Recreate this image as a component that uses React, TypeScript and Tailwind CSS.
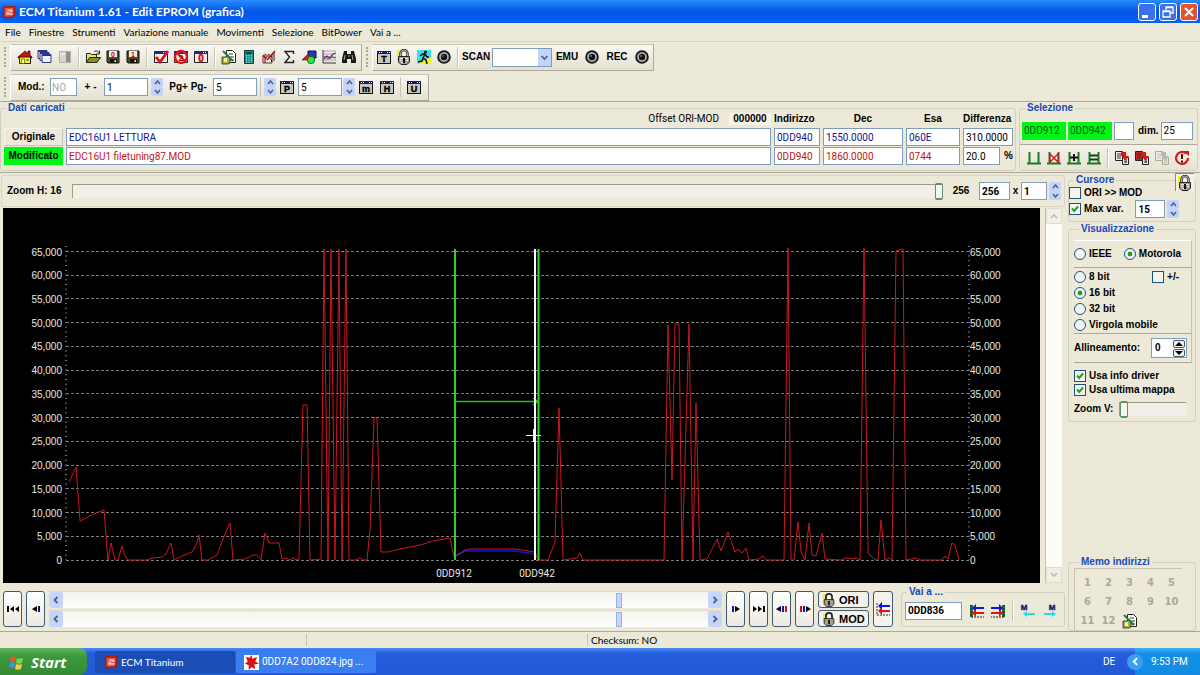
import React from 'react';
import clsx from 'clsx';

const BOLD = "font-['Liberation_Sans',Arial,sans-serif] text-[10px] leading-3 font-bold";
const UI = "font-[Roboto,'Liberation_Sans',sans-serif] text-[10px] leading-3";
const MENU = "font-[Lato,'Liberation_Sans',sans-serif] text-[10px] leading-3";

// [x, y] points of the MOD trace, in chart units
const TRACE = [
    [69, 482], [76, 467], [80, 521], [94, 514], [104, 510], [108, 560], [111, 543], [115, 560], [118, 560], [122, 546],
    [125, 556], [128, 560], [147, 560], [153, 558], [162, 557], [166, 554], [171, 543], [174, 560], [182, 556], [192, 552],
    [197, 543], [199, 535], [202, 560], [208, 560], [217, 555], [225, 534], [230, 523], [233, 560], [245, 559], [253, 555],
    [257, 555], [261, 560], [265, 533], [269, 543], [279, 543], [282, 559], [286, 558], [290, 560], [293, 558], [296, 560],
    [299, 559], [303, 405], [307, 405], [310, 560], [321, 559], [324, 249], [328, 560], [331, 249], [335, 560], [339, 249],
    [342, 560], [346, 249], [349, 560], [356, 560], [360, 558], [363, 560], [367, 560], [370, 530], [374, 418], [377, 418],
    [381, 552], [388, 552], [400, 549], [420, 545], [433, 541], [450, 538], [454, 557], [465, 550], [471, 549], [515, 549],
    [535, 552], [538, 560], [548, 560], [552, 550], [555, 542], [559, 408], [563, 560], [577, 558], [580, 553], [583, 560],
    [664, 560], [668, 325], [672, 480], [675, 324], [679, 324], [682, 560], [689, 324], [693, 560], [696, 403], [700, 560],
    [707, 559], [717, 539], [721, 551], [728, 532], [735, 552], [738, 549], [742, 553], [746, 548], [749, 560], [759, 559],
    [763, 556], [766, 560], [784, 560], [788, 248], [791, 560], [794, 560], [798, 522], [801, 552], [805, 560], [809, 523],
    [812, 555], [816, 556], [822, 533], [825, 559], [841, 560], [846, 558], [851, 559], [856, 558], [860, 560], [864, 248],
    [868, 553], [875, 560], [878, 560], [881, 520], [885, 560], [889, 558], [892, 560], [896, 251], [903, 249], [906, 560],
    [916, 558], [920, 560], [942, 560], [945, 556], [948, 559], [952, 543], [955, 545], [959, 560],
];

const LEVELS = [65, 60, 55, 50, 45, 40, 35, 30, 25, 20, 15, 10, 5, 0];
const yOf = (k: number) => 560 - (k * 308.5) / 65;

function Glyph({ children, size = 16 }: { children: React.ReactNode; size?: number }) {
    return (
        <svg viewBox="0 0 16 16" width={size} height={size} className="shrink-0" aria-hidden="true">
            {children}
        </svg>
    );
}

function LetterIcon({ letter }: { letter: string }) {
    return (
        <Glyph>
            <path d="M1 2h14v13H1z" fill="#111" />
            <path d="M2 5h12v9H2z" fill="#c9c7c0" />
            <path d="M1 2h14v3H1z" fill="#1c1c60" />
            <path d="M3 3h1v1H3zM5 3h1v1H5zM11 3h1v1h-1zM13 3h1v1h-1z" fill="#fff" />
            <text x="8" y="13" textAnchor="middle" fontSize="9" fontWeight="900" fontFamily="Liberation Sans" stroke="#000" strokeWidth=".4">{letter}</text>
        </Glyph>
    );
}

function Lock() {
    return (
        <Glyph>
            <path d="M1 1h6l-2 6-4 5z" fill="#f3ee3c" />
            <path d="M4.500 8V4.500a3.500 3.500 0 0 1 7 0V8" fill="none" stroke="#222" strokeWidth="2.400" />
            <path d="M4.500 8V4.500a3.500 3.500 0 0 1 7 0V8" fill="none" stroke="#ddd" strokeWidth=".8" />
            <path d="M2.500 7.500h11V13l-2.500 2.500H5L2.500 13z" fill="#a3a18c" stroke="#222" />
            <path d="M4 9.500h8M4 11.500h2M10 11.500h2M5 13.500h2" stroke="#eee" />
            <path d="M7 9h2v5H7z" fill="#111" />
        </Glyph>
    );
}

function Target() {
    return (
        <Glyph>
            <circle cx="8" cy="8" r="6" fill="#777" stroke="#111" strokeWidth="1.500" />
            <circle cx="8" cy="8" r="4.300" fill="#c4c4c4" />
            <circle cx="8" cy="8" r="3.200" fill="#111" />
            <circle cx="7" cy="7" r="1" fill="#777" />
        </Glyph>
    );
}

function Floppy({ letter }: { letter: string }) {
    return (
        <Glyph>
            <path d="M2 2h12v12H3l-1-1z" fill="#4d4a1c" stroke="#111" />
            <path d="M4 2h8v6H4z" fill="#f4eeee" />
            <path d="M5 10h7v4H5z" fill="#111" />
            <path d="M9.500 11h1.500v2H9.500z" fill="#ddd" />
            <text x="8" y="7.600" textAnchor="middle" fontSize="7" fontWeight="bold" fontFamily="Liberation Sans" fill="#c00">{letter}</text>
        </Glyph>
    );
}

function WindowBase() {
    return (
        <>
            <path d="M1.500 2.500h13v11h-13z" fill="#f1efec" stroke="#222" />
            <path d="M1 2h14v3H1z" fill="#26267c" />
            <path d="M10 3h1v1h-1zM12 3h1v1h-1z" fill="#fff" />
        </>
    );
}

function NoteIcon() {
    return (
        <Glyph>
            <path d="M5.500 1.500h6l3 3v9h-9z" fill="#fff" stroke="#222" />
            <path d="M8 5h4M9 8h4M9 11h4" stroke="#333" />
            <path d="M1 8h4l2-2 2 3v5l-2 1H1z" fill="#a9ad3f" stroke="#222" strokeWidth=".8" />
            <path d="M3 9h3v4H3z" fill="#f5f3a0" />
            <path d="M2 2l10 10" stroke="#1d7a3a" strokeWidth="1.800" />
        </Glyph>
    );
}

const toolIcons: Record<string, React.ReactNode> = {
    Home: (
        <Glyph>
            <path d="M1 8l7-6 3 2.500V2h2v4l2 2v1H1z" fill="#c71515" stroke="#400" strokeWidth=".7" />
            <path d="M2.500 8h11v6.500h-11z" fill="#fdf21a" stroke="#222" />
            <path d="M4.500 10h3v4.500h-3z" fill="#fff9a8" stroke="#665c00" strokeWidth=".7" />
            <path d="M9.500 10h2v2h-2z" fill="#2a8fa3" />
        </Glyph>
    ),
    Windows: (
        <Glyph>
            {[1, 3, 5].map((o) => (
                <g key={o}>
                    <path d={`M${o} ${o + 0.5}h9v8h-9z`} fill="#eef0fa" stroke="#333c78" />
                    <path d={`M${o} ${o}h9v2h-9z`} fill="#28348c" />
                </g>
            ))}
        </Glyph>
    ),
    Panels: (
        <Glyph>
            <path d="M2.500 2.500h11v11h-11z" fill="#d8d6cd" stroke="#b4b2a7" />
            <path d="M9 3h4v10H9z" fill="#918f88" />
            <path d="M3 5h5" stroke="#f5f5f0" />
        </Glyph>
    ),
    Open: (
        <Glyph>
            <path d="M1.500 13.500v-9h4l1 1h5v3" fill="#e7e26c" stroke="#222" />
            <path d="M1.500 13.500l3-5h11l-3.500 5z" fill="#8f8f16" stroke="#222" />
            <path d="M9 3c2-2 4-1 5 1M14.500 1.500V5H11" fill="none" stroke="#222" />
        </Glyph>
    ),
    'Save 0': <Floppy letter="0" />,
    'Save 1': <Floppy letter="1" />,
    Apply: (
        <Glyph>
            <WindowBase />
            <path d="M3 8l4 5 8-11" fill="none" stroke="#e01020" strokeWidth="2.800" />
        </Glyph>
    ),
    Refuse: (
        <Glyph>
            <WindowBase />
            <circle cx="8" cy="8" r="6" fill="none" stroke="#e01020" strokeWidth="2.400" />
            <path d="M4 4l8 8" stroke="#e01020" strokeWidth="2" />
            <text x="8" y="11.500" textAnchor="middle" fontSize="9" fontWeight="bold" fontFamily="Liberation Sans" fill="#b00">2</text>
        </Glyph>
    ),
    Zero: (
        <Glyph>
            <WindowBase />
            <text x="8" y="13" textAnchor="middle" fontSize="10" fontWeight="bold" fontFamily="Liberation Sans" fill="#d01010" stroke="#d01010" strokeWidth=".5">0</text>
        </Glyph>
    ),
    Notes: <NoteIcon />,
    Calculator: (
        <Glyph>
            <path d="M3.500 1.500h9v13h-9z" fill="#1d8f8c" stroke="#0b3c3c" />
            <path d="M5 3h6v2H5z" fill="#0c4a4c" />
            <path d="M5.500 6v8M8 6v8M10.500 6v8" stroke="#7fe0dc" strokeDasharray="1.300 1" />
        </Glyph>
    ),
    Compare: (
        <Glyph>
            <path d="M2 7l3-2v4l3-4v4l3-3v8H2z" fill="#f2e9e6" stroke="#822" />
            <path d="M2 6l3 4M6 11l8-9" stroke="#b01818" strokeWidth="1.800" />
            <path d="M10.500 7v6M13 4v8M4 10v4" stroke="#222" />
            <path d="M9 10l5-2" stroke="#888" strokeWidth="2" />
        </Glyph>
    ),
    Sum: (
        <Glyph>
            <path d="M12.500 5V2.500H4L8.500 8 4 13.500h8.500V11" fill="none" stroke="#222" strokeWidth="1.400" />
        </Glyph>
    ),
    Shapes: (
        <Glyph>
            <path d="M7 2h8v7H7z" fill="#2638b8" stroke="#114" />
            <path d="M1 11l6-6 4 6z" fill="#d81818" stroke="#600" strokeWidth=".6" />
            <circle cx="10" cy="11" r="3.700" fill="#2ce43c" stroke="#052" strokeWidth=".8" />
        </Glyph>
    ),
    Graph: (
        <Glyph>
            <path d="M2 2h13M2 5h13M2 8h13M2 11h13" stroke="#a5a2ae" />
            <path d="M2 1v13h13" fill="none" stroke="#333" />
            <path d="M3 10l3-3 3 2 3-4 3-1" fill="none" stroke="#8b1f6f" strokeWidth="1.300" />
            <path d="M3 7l4 3 4-2 4 1" fill="none" stroke="#55506a" />
        </Glyph>
    ),
    Find: (
        <Glyph>
            <path d="M3 2h3v3h4V2h3l2 8v4h-5v-4H6v4H1v-4z" fill="#161616" />
            <path d="M4 6l-1 5M11 6l1 5M7 7h2" stroke="#aaa" />
        </Glyph>
    ),
};

const tools = [
    ['Home', 'Windows', 'Panels'],
    ['Open', 'Save 0', 'Save 1'],
    ['Apply', 'Refuse', 'Zero'],
    ['Notes', 'Calculator', 'Compare', 'Sum', 'Shapes', 'Graph', 'Find'],
];

function ToolButton({ label, children }: { label: string; children: React.ReactNode }) {
    return (
        <button aria-label={label} className="flex h-5 w-5 shrink-0 items-center justify-center">
            {children}
        </button>
    );
}

function Sep() {
    return <span className="mx-[3px] h-5 w-[2px] shrink-0 border-l border-[#c5c2b2] bg-white" />;
}

function Grip() {
    return <span className="mx-1 h-5 w-[2px] shrink-0 border-l-2 border-dotted border-[#aaa797]" />;
}

function Band({ children, className }: { children: React.ReactNode; className?: string }) {
    return (
        <div className={clsx('flex h-[27px] items-center border-t border-l border-r border-b border-t-[#c8c5b5] border-l-[#fff] border-r-[#aca899] border-b-[#aca899] bg-linear-to-b from-[#f8f7f2] to-[#e4e1d0]', className)}>
            {children}
        </div>
    );
}

type FieldProps = { label: string; value: string; className?: string; tone?: string };

function Field({ label, value, className, tone = 'border border-[#7f9db9] bg-white' }: FieldProps) {
    return (
        <input
            aria-label={label}
            defaultValue={value}
            className={clsx(UI, 'h-[18px] min-w-0 px-[2px] outline-none', tone, className)}
        />
    );
}

function Spinner({ label }: { label: string }) {
    return (
        <span className="flex w-3 shrink-0 flex-col">
            <button aria-label={`${label} +`} className="flex h-[9px] items-center justify-center rounded-[2px] bg-[#c3d3fb]">
                <svg viewBox="0 0 7 5" width="7" height="5"><path d="M1 4l2.500-3L6 4" fill="none" stroke="#4d6185" strokeWidth="1.500" /></svg>
            </button>
            <button aria-label={`${label} -`} className="flex h-[9px] items-center justify-center rounded-[2px] bg-[#c3d3fb]">
                <svg viewBox="0 0 7 5" width="7" height="5"><path d="M1 1l2.500 3L6 1" fill="none" stroke="#4d6185" strokeWidth="1.500" /></svg>
            </button>
        </span>
    );
}

function Check({ label, checked }: { label: string; checked?: boolean }) {
    return (
        <label className={clsx(BOLD, 'flex h-[14px] items-center gap-[3px] whitespace-nowrap')}>
            <span className="grid">
                <input type="checkbox" defaultChecked={checked} className="peer h-3 w-3 appearance-none border border-[#1c5180] bg-[#f4f4f0] [grid-area:1/1]" />
                <svg viewBox="0 0 12 12" width="12" height="12" className="pointer-events-none hidden [grid-area:1/1] peer-checked:block">
                    <path d="M3 5.500l2.200 2.500L9 3.500" fill="none" stroke="#21a121" strokeWidth="2" />
                </svg>
            </span>
            {label}
        </label>
    );
}

function Radio({ label, name, checked }: { label: string; name: string; checked?: boolean }) {
    return (
        <label className={clsx(BOLD, 'flex h-4 items-center gap-[3px] whitespace-nowrap')}>
            <input
                type="radio"
                name={name}
                defaultChecked={checked}
                className="h-3 w-3 appearance-none rounded-full border border-[#1c5180] bg-[#f4f4f0] checked:bg-[radial-gradient(circle,#21a121_30%,#f4f4f0_38%)]"
            />
            {label}
        </label>
    );
}

function Group({ title, children, className }: { title: string; children: React.ReactNode; className?: string }) {
    return (
        <fieldset className={clsx('min-w-0 rounded-[3px] border border-[#d0d0bf]', className)}>
            <legend className="ml-[5px] px-[2px] font-['Liberation_Sans',Arial,sans-serif] text-[10px] leading-[10px] font-bold text-[#1648b8]">{title}</legend>
            {children}
        </fieldset>
    );
}

function NavButton({ label, children }: { label: string; children: React.ReactNode }) {
    return (
        <button aria-label={label} className="flex h-9 w-[19px] shrink-0 items-center justify-center rounded-[3px] border border-[#3c5a73] bg-linear-to-b from-white to-[#eceae0]">
            <svg viewBox="0 0 14 10" width="14" height="10">{children}</svg>
        </button>
    );
}

function HScroll({ label }: { label: string }) {
    return (
        <div className="flex h-[17px] border-t border-[#dcdad0] bg-linear-to-b from-[#f3f2ec] to-[#fefefb]">
            <button aria-label={`${label} indietro`} className="flex w-[14px] items-center justify-center rounded-[2px] bg-[#c5d5fc]">
                <svg viewBox="0 0 8 8" width="8" height="8"><path d="M5.500 1L2.500 4l3 3" fill="none" stroke="#4d6185" strokeWidth="1.800" /></svg>
            </button>
            <input
                type="range"
                aria-label={label}
                max={1000}
                defaultValue={866}
                className="h-4 min-w-0 flex-1 appearance-none bg-transparent [&::-webkit-slider-thumb]:h-[15px] [&::-webkit-slider-thumb]:w-[6px] [&::-webkit-slider-thumb]:appearance-none [&::-webkit-slider-thumb]:border [&::-webkit-slider-thumb]:border-[#98b1e4] [&::-webkit-slider-thumb]:bg-[#c5d5fc]"
            />
            <button aria-label={`${label} avanti`} className="flex w-[14px] items-center justify-center rounded-[2px] bg-[#c5d5fc]">
                <svg viewBox="0 0 8 8" width="8" height="8"><path d="M2.500 1l3 3-3 3" fill="none" stroke="#4d6185" strokeWidth="1.800" /></svg>
            </button>
        </div>
    );
}

// two stacked arrows against a ruled bar
function ArrowsIcon({ flip, bars }: { flip?: boolean; bars?: boolean }) {
    return (
        <Glyph>
            <g transform={flip ? 'matrix(-1 0 0 1 16 0)' : undefined}>
                {bars && <path d="M1 2h3v12H1z" fill="#1c7a26" />}
                <path d="M2 2v12M2 14h13" stroke="#222" strokeDasharray="2 1" />
                <path d="M3 5l4-4v3h8v2H7v3z" fill="#1414e0" />
                <path d="M3 10l4-4v3h8v2H7v3z" fill="#e01414" />
                <path d="M4 5l3-3v2h8v2H7v2z" fill="#1414e0" />
            </g>
        </Glyph>
    );
}

function MemoArrow({ flip }: { flip?: boolean }) {
    return (
        <Glyph>
            <text x={flip ? 11 : 4} y="7" textAnchor="middle" fontSize="8" fontWeight="bold" fontFamily="Liberation Sans" fill="#10107a" stroke="#10107a" strokeWidth=".4">M</text>
            <path d={flip ? 'M15 11l-4-3v2H3v2h8v2z' : 'M3 11l4-3v2h8v2H7v2z'} fill="#25dfe2" />
        </Glyph>
    );
}

function SelIcon({ kind }: { kind: string }) {
    return (
        <Glyph>
            <path d="M3.500 2v11M12.500 2v11M1 13.500h14" stroke="#1c7a26" strokeWidth="2" />
            {kind === 'clear' && <path d="M4 4l8 8V4l-8 8z" fill="#fff" stroke="#d41616" strokeWidth="1.400" />}
            {kind === 'plus' && <path d="M4 7.500h8M8 4v7" stroke="#111" strokeWidth="2" />}
            {kind === 'equal' && <path d="M4 5.500h8M4 9.500h8" stroke="#173c1a" strokeWidth="2" />}
        </Glyph>
    );
}

function CopyIcon({ tone }: { tone: string }) {
    const off = tone === 'off';
    return (
        <Glyph>
            <path d="M1.500 1.500h7v9h-7z" fill={tone === 'red' ? '#d02020' : '#eee'} stroke={off ? '#aaa89c' : '#222'} />
            <path d="M3 4h4M3 6h4M3 8h4" stroke={off ? '#c4c2b6' : '#333'} />
            <path d="M8.500 7.500h6v7h-6z" fill={off ? '#e4e2d6' : '#f6e9c8'} stroke={off ? '#aaa89c' : '#222'} />
            <path d="M10 12h3M12 9v4" stroke={off ? '#c4c2b6' : '#333'} />
            <path d="M7 2h5v4h3l-4 5-3-5H7z" fill={off ? '#bbb9ad' : '#d81717'} />
        </Glyph>
    );
}

function AppIcon() {
    return (
        <Glyph size={14}>
            <path d="M3 1h12v11l-3 3H1V3z" fill="#a81c16" />
            <path d="M4 3h9v8l-2 2H3V4z" fill="#e0584a" />
            <path d="M6 5h6v3H8v1h4v2H5V8h4V7H6z" fill="#fff" opacity=".6" />
        </Glyph>
    );
}

function Chart() {
    return (
        <svg viewBox="3 208 1037 375" className="block w-full bg-black" role="img" aria-label="EPROM">
            {LEVELS.map((k) => (
                <g key={k}>
                    <path d={`M66 ${Math.floor(yOf(k)) + 0.5}H970`} stroke="#808080" strokeDasharray="3 2" />
                    <text x="62" y={yOf(k) + 4} textAnchor="end" className="fill-[#e8e8e8] font-['Liberation_Sans',Arial,sans-serif] text-[10px]">
                        {k ? `${k},000` : '0'}
                    </text>
                    <text x="970" y={yOf(k) + 4} className="fill-[#e8e8e8] font-['Liberation_Sans',Arial,sans-serif] text-[10px]">
                        {k ? `${k},000` : '0'}
                    </text>
                </g>
            ))}
            <path d="M66 246V560M969 246V560" stroke="#777" strokeWidth="2" strokeDasharray="1 3.750" />
            <polyline points="454,557 465,551 515,551 535,554" fill="none" stroke="#1414d8" strokeWidth="1.500" />
            <polyline points={TRACE.map((p) => p.join(',')).join(' ')} fill="none" stroke="#c8191e" />
            <path d="M455 249V560M538.500 249V560" stroke="#2fd02f" strokeWidth="2" />
            <path d="M455 401.500H538M533 398l5 3.500-5 3.500" fill="none" stroke="#22c022" strokeWidth="1.400" />
            <path d="M535 249V560" stroke="#fff" strokeWidth="2" />
            <path d="M526 435.500h15M533.500 429v13" stroke="#fff" />
            <text x="454" y="577" textAnchor="middle" className="fill-[#e8e8e8] font-[Roboto,sans-serif] text-[10px]">0DD912</text>
            <text x="537" y="577" textAnchor="middle" className="fill-[#e8e8e8] font-[Roboto,sans-serif] text-[10px]">0DD942</text>
        </svg>
    );
}

function TitleBar() {
    return (
        <header className="flex h-[23px] items-center gap-[3px] bg-linear-to-b from-[#2a8bff] via-[#0456e4] to-[#0562fb] px-[2px]">
            <AppIcon />
            <h1 className="flex-1 font-[Lato,sans-serif] text-[12px] leading-4 font-bold whitespace-nowrap text-white">ECM Titanium 1.61 - Edit EPROM (grafica)</h1>
            <button aria-label="Riduci" className="flex h-[18px] w-[18px] items-center justify-center rounded-[3px] border border-white bg-[#3a70ec]">
                <svg viewBox="0 0 16 16" width="16" height="16"><path d="M3 11h6v3H3z" fill="#fff" /></svg>
            </button>
            <button aria-label="Ripristina" className="flex h-[18px] w-[18px] items-center justify-center rounded-[3px] border border-white bg-[#3a70ec]">
                <svg viewBox="0 0 16 16" width="16" height="16"><path d="M6 6V3h7v6h-3M3 7h7v6H3zM3 7.500h7M6 3.500h7" fill="none" stroke="#fff" strokeWidth="1.300" /></svg>
            </button>
            <button aria-label="Chiudi" className="flex h-[18px] w-[18px] items-center justify-center rounded-[3px] border border-white bg-[#e2522e]">
                <svg viewBox="0 0 16 16" width="16" height="16"><path d="M4 4l8 8M12 4l-8 8" stroke="#fff" strokeWidth="2" /></svg>
            </button>
        </header>
    );
}

function Toolbars() {
    return (
        <div className="flex flex-col gap-[2px] border-t border-b border-t-[#d5d2c2] border-b-[#aca899] pt-px">
            <div className="flex h-7 items-center">
                <Grip />
                <Band className="pr-[2px] pl-1">
                    {tools.map((group, i) => (
                        <React.Fragment key={i}>
                            {i > 0 && <Sep />}
                            {group.map((name) => <ToolButton key={name} label={name}>{toolIcons[name]}</ToolButton>)}
                        </React.Fragment>
                    ))}
                </Band>
                <Grip />
                <Band className="px-px">
                    <ToolButton label="Testo"><LetterIcon letter="T" /></ToolButton>
                    <ToolButton label="Blocca"><Lock /></ToolButton>
                    <ToolButton label="Esegui">
                        <Glyph>
                            <path d="M1 1h14v9L1 15z" fill="#3be0ee" />
                            <path d="M1 15l14-7v7z" fill="#f6f11e" />
                            <circle cx="9.500" cy="3" r="1.600" />
                            <path d="M9 5L7 9l3 2 1 4M7 9l-1 3-4 1M4 7l3-2h2l2 3h2" fill="none" stroke="#111" strokeWidth="1.500" />
                        </Glyph>
                    </ToolButton>
                    <ToolButton label="Stato"><Target /></ToolButton>
                    <Sep />
                    <label htmlFor="scan" className={clsx(BOLD, 'w-[30px]')}>SCAN</label>
                    <span className="grid">
                        <select id="scan" className="h-[19px] w-[60px] appearance-none border border-[#7f9db9] bg-white [grid-area:1/1]">
                            <option value=""></option>
                        </select>
                        <svg viewBox="0 0 14 17" width="14" height="17" className="pointer-events-none self-center justify-self-end [grid-area:1/1]">
                            <path d="M0 0h13v17H0z" fill="#c3d3fb" />
                            <path d="M3.500 7l3 3 3-3" fill="none" stroke="#4d6185" strokeWidth="1.700" />
                        </svg>
                    </span>
                    <span className={clsx(BOLD, 'w-[30px] text-center')}>EMU</span>
                    <ToolButton label="EMU"><Target /></ToolButton>
                    <span className={clsx(BOLD, 'w-[30px] text-center')}>REC</span>
                    <ToolButton label="REC"><Target /></ToolButton>
                </Band>
            </div>
            <div className="flex h-7 items-center">
                <Grip />
                <Band className="gap-[3px] px-1">
                    <label htmlFor="mod" className={clsx(BOLD, 'w-[32px] pl-[3px]')}>Mod.:</label>
                    <input id="mod" defaultValue="NO" className={clsx(UI, 'h-[18px] w-[27px] border border-[#7f9db9] bg-white px-px text-[#aca899]')} />
                    <span className={clsx(BOLD, 'w-[21px] text-center')}>+ -</span>
                    <Field label="Passo" value="1" className="w-11" />
                    <Spinner label="Passo" />
                    <span className={clsx(BOLD, 'w-[44px] text-center whitespace-nowrap')}>Pg+ Pg-</span>
                    <Field label="Pagina" value="5" className="w-11" />
                    <span className="h-5 w-px bg-[#c5c2b2]" />
                    <div className="flex items-center gap-px">
                        <Spinner label="Pagina" />
                        <ToolButton label="P"><LetterIcon letter="P" /></ToolButton>
                        <Field label="Media" value="5" className="w-11" />
                        <Spinner label="Media" />
                        <ToolButton label="m"><LetterIcon letter="m" /></ToolButton>
                        <ToolButton label="H"><LetterIcon letter="H" /></ToolButton>
                    </div>
                    <span className="h-5 w-px bg-[#c5c2b2]" />
                    <ToolButton label="U"><LetterIcon letter="U" /></ToolButton>
                </Band>
            </div>
        </div>
    );
}

function DataRow() {
    return (
        <section className="flex gap-[3px] border-b border-[#aca899] pt-px pr-[2px] pb-px">
            <Group title="Dati caricati" className="flex-1">
                <div className="grid grid-cols-[59px_1fr_46px_80px_54px_50px] items-center gap-x-[3px] gap-y-px pr-[2px] pl-[3px]">
                    <div className="col-span-2 flex h-3 items-center justify-end gap-[10px]">
                        <span className={UI}>Offset ORI-MOD</span>
                        <span className={clsx(BOLD, 'w-[42px] bg-[#f6f4e6] text-center')}>000000</span>
                    </div>
                    <span className={BOLD}>Indirizzo</span>
                    <span className={clsx(BOLD, 'text-center')}>Dec</span>
                    <span className={clsx(BOLD, 'text-center')}>Esa</span>
                    <span className={BOLD}>Differenza</span>

                    <span className="col-span-6 h-px" />

                    <button className={clsx(BOLD, 'h-[18px] border border-[#f8f6ec] border-r-[#c5c2b2] border-b-[#c5c2b2]')}>Originale</button>
                    <Field label="File originale" value="EDC16U1 LETTURA" className="text-[#14148c]" />
                    <Field label="Indirizzo originale" value="0DD940" className="text-[#14148c]" />
                    <Field label="Dec originale" value="1550.0000" className="text-[#14148c]" />
                    <Field label="Esa originale" value="060E" className="text-[#14148c]" />
                    <Field label="Differenza" value="310.0000" />

                    <button className={clsx(BOLD, 'h-[18px] bg-[#00f514]')}>Modificato</button>
                    <Field label="File modificato" value="EDC16U1 filetuning87.MOD" className="text-[#c01414]" />
                    <Field label="Indirizzo modificato" value="0DD940" className="text-[#c01414]" />
                    <Field label="Dec modificato" value="1860.0000" className="text-[#c01414]" />
                    <Field label="Esa modificato" value="0744" className="text-[#c01414]" />
                    <div className={clsx(BOLD, 'flex items-center gap-1')}>
                        <Field label="Differenza percentuale" value="20.0" className="w-[38px] font-normal" />%
                    </div>
                </div>
            </Group>
            <Group title="Selezione" className="w-[179px]">
                <div className="flex h-[31px] items-center gap-[2px] px-[2px] pt-1">
                    <Field label="Inizio" value="0DD912" className="w-11" tone="bg-[#00f514] text-[#0a5a12]" />
                    <Field label="Fine" value="0DD942" className="w-11" tone="bg-[#00f514] text-[#0a5a12]" />
                    <Field label="Selezione" value="" className="w-5" />
                    <label htmlFor="dim" className={clsx(BOLD, 'pl-[2px]')}>dim.</label>
                    <input id="dim" defaultValue="25" className={clsx(UI, 'h-[18px] w-8 border border-[#7f9db9] bg-white px-[2px]')} />
                </div>
                <div className="flex h-[26px] items-center border-t border-[#aca899] bg-linear-to-b from-[#f4f2ea] to-[#e6e3d3] pl-1">
                    <ToolButton label="Seleziona"><SelIcon kind="none" /></ToolButton>
                    <ToolButton label="Deseleziona"><SelIcon kind="clear" /></ToolButton>
                    <ToolButton label="Aggiungi"><SelIcon kind="plus" /></ToolButton>
                    <ToolButton label="Uguale"><SelIcon kind="equal" /></ToolButton>
                    <Sep />
                    <ToolButton label="Copia"><CopyIcon tone="dark" /></ToolButton>
                    <ToolButton label="Incolla"><CopyIcon tone="red" /></ToolButton>
                    <ToolButton label="Duplica"><CopyIcon tone="off" /></ToolButton>
                    <ToolButton label="Ripristina">
                        <Glyph>
                            <path d="M12 3.500A6 6 0 1 0 14 8" fill="none" stroke="#d81717" strokeWidth="2.200" />
                            <path d="M9 1h6v5z" fill="#d81717" />
                            <path d="M8 4v5M8 10.500v2" stroke="#5c0808" strokeWidth="2" />
                        </Glyph>
                    </ToolButton>
                </div>
            </Group>
        </section>
    );
}

const trackThumb =
    'appearance-none border-t border-l border-[#9d9a8c] bg-[#f0efe8] [&::-webkit-slider-thumb]:appearance-none [&::-webkit-slider-thumb]:rounded-[2px] [&::-webkit-slider-thumb]:border [&::-webkit-slider-thumb]:border-y-2 [&::-webkit-slider-thumb]:border-[#5f9168] [&::-webkit-slider-thumb]:bg-[#f6f6f0] [&::-webkit-slider-thumb]:w-2 [&::-webkit-slider-thumb]:h-[17px]';

function ZoomRow() {
    return (
        <div className="mx-px mt-[2px] mb-px flex h-8 items-center rounded-[3px] border border-[#d8d5c5] pl-[5px]">
            <label htmlFor="zoomh" className={clsx(BOLD, 'w-[65px] whitespace-nowrap')}>Zoom H: 16</label>
            <input id="zoomh" type="range" defaultValue={100} className={clsx(trackThumb, 'h-[14px] min-w-0 flex-1')} />
            <span className={clsx(BOLD, 'w-[36px] text-center')}>256</span>
            <Field label="Colonne" value="256" className="w-[31px] font-bold" />
            <span className={clsx(BOLD, 'w-[11px] text-center')}>x</span>
            <Field label="Righe" value="1" className="mr-[2px] w-[26px] font-bold" />
            <Spinner label="Righe" />
            <span className="w-[3px]" />
        </div>
    );
}

function BottomRow() {
    return (
        <div className="flex items-end gap-1 pr-px pb-1 pl-[3px]">
            <NavButton label="Inizio"><path d="M1 2h2v6H1zM8 2v6L4 5zM13 2v6L9 5z" /></NavButton>
            <NavButton label="Indietro"><path d="M8 2v6L3 5z" /><path d="M9 2h2v6H9z" fill="#14147a" /></NavButton>
            <div className="flex min-w-0 flex-1 flex-col gap-[2px]">
                <HScroll label="Originale" />
                <HScroll label="Modificato" />
            </div>
            <NavButton label="Avanti"><path d="M3 2h2v6H3z" fill="#1414c8" /><path d="M6 2v6l5-3z" /></NavButton>
            <NavButton label="Fine"><path d="M1 2v6l4-3zM6 2v6l4-3zM11 2h2v6h-2z" /></NavButton>
            <NavButton label="Differenza precedente"><path d="M6 2v6L1 5z" /><path d="M7 2h2v6H7z" fill="#1414c8" /><path d="M10 2h2v6h-2z" fill="#c81414" /></NavButton>
            <NavButton label="Differenza seguente"><path d="M2 2h2v6H2z" fill="#c81414" /><path d="M5 2h2v6H5z" fill="#1414c8" /><path d="M8 2v6l5-3z" /></NavButton>
            <div className="flex w-[51px] flex-col gap-[2px]">
                {['ORI', 'MOD'].map((t) => (
                    <button key={t} className="flex h-[17px] items-center gap-[3px] rounded-[3px] border border-[#3c5a73] bg-[#f4f2ea] pl-[3px] font-['Liberation_Sans',Arial,sans-serif] text-[11px] leading-3 font-bold">
                        <Glyph size={14}>
                            <path d="M1 1h6l-2 6-4 5z" fill="#f3ee3c" />
                            <path d="M4.500 8V4.500a3.500 3.500 0 0 1 7 0V8" fill="none" stroke="#222" strokeWidth="2" />
                            <path d="M2.500 7.500h11V13l-2.500 2.500H5L2.500 13z" fill="#a3a18c" stroke="#222" />
                            <path d="M7 9h2v5H7z" fill="#111" />
                        </Glyph>
                        {t}
                    </button>
                ))}
            </div>
            <button aria-label="Allinea" className="flex h-9 w-5 items-center justify-center rounded-[3px] border border-[#3c5a73] bg-[#f4f2ea]"><ArrowsIcon /></button>
            <Group title="Vai a ..." className="ml-1 w-[164px]">
                <div className="flex h-[29px] items-center gap-px px-[3px] pb-[2px]">
                    <Field label="Vai a" value="0DD836" className="mr-1 w-[57px] font-bold" />
                    <ToolButton label="Precedente"><ArrowsIcon bars /></ToolButton>
                    <ToolButton label="Successivo"><ArrowsIcon bars flip /></ToolButton>
                    <Sep />
                    <ToolButton label="Memo indietro"><MemoArrow /></ToolButton>
                    <ToolButton label="Memo avanti"><MemoArrow flip /></ToolButton>
                </div>
            </Group>
        </div>
    );
}

function SidePanel() {
    return (
        <aside className="flex w-[134px] shrink-0 flex-col pt-[2px] pr-1 pl-[2px]">
            <div className="relative">
                <Group title="Cursore" className="pb-[3px]">
                    <div className="flex flex-col pt-px">
                        <Check label="ORI >> MOD" />
                        <div className="flex h-[18px] items-center gap-[2px]">
                            <Check label="Max var." checked />
                            <span className="w-2" />
                            <Field label="Max var." value="15" className="w-[30px] font-bold" />
                            <Spinner label="Max var." />
                        </div>
                    </div>
                </Group>
                <button aria-label="Blocca cursore" className="absolute top-[-2px] right-[2px] flex h-[18px] w-[19px] items-center justify-center border-t border-l border-[#8d8a7c] bg-[#f4f2ea]"><Lock /></button>
            </div>
            <Group title="Visualizzazione" className="mt-[2px] pr-[3px] pl-[5px]">
                <div className="mt-[6px] flex h-7 items-center gap-3 border-t border-r border-b border-t-[#fff] border-r-[#c5c2b2] border-b-[#aca899]">
                    <Radio name="endian" label="IEEE" />
                    <Radio name="endian" label="Motorola" checked />
                </div>
                <div className="border-r border-b border-r-[#c5c2b2] border-b-[#aca899] pt-px">
                    <div className="flex items-center justify-between pr-3">
                        <Radio name="bits" label="8 bit" />
                        <Check label="+/-" />
                    </div>
                    <Radio name="bits" label="16 bit" checked />
                    <Radio name="bits" label="32 bit" />
                    <Radio name="bits" label="Virgola mobile" />
                </div>
                <div className="flex h-[29px] items-center justify-between border-r border-b border-r-[#c5c2b2] border-b-[#aca899] pr-1">
                    <label htmlFor="align" className={BOLD}>Allineamento:</label>
                    <span className="flex h-5 w-9 items-center border border-[#7f9db9] bg-white pr-px">
                        <input id="align" defaultValue="0" className={clsx(BOLD, 'w-0 min-w-0 flex-1 px-[3px]')} />
                        <span className="flex flex-col gap-px">
                            <button aria-label="Allineamento +" className="flex h-2 w-3 items-center justify-center rounded-[2px] border border-[#3c5a73] bg-[#f4f2ea]">
                                <svg viewBox="0 0 8 4" width="8" height="4"><path d="M0 4l4-4 4 4z" /></svg>
                            </button>
                            <button aria-label="Allineamento -" className="flex h-2 w-3 items-center justify-center rounded-[2px] border border-[#3c5a73] bg-[#f4f2ea]">
                                <svg viewBox="0 0 8 4" width="8" height="4"><path d="M0 0l4 4 4-4z" /></svg>
                            </button>
                        </span>
                    </span>
                </div>
                <div className="pt-[6px]">
                    <Check label="Usa info driver" checked />
                    <Check label="Usa ultima mappa" checked />
                </div>
                <div className="flex h-6 items-center gap-[6px]">
                    <label htmlFor="zoomv" className={BOLD}>Zoom V:</label>
                    <input id="zoomv" type="range" defaultValue={0} className={clsx(trackThumb, 'h-[14px] w-[67px]')} />
                </div>
            </Group>
            <Group title="Memo indirizzi" className="mt-auto px-[5px]">
                <div className="mt-px grid w-[108px] grid-cols-5 border-t border-l border-[#c5c2b2] pt-1 pl-[2px]">
                    {Array.from({ length: 12 }, (_, i) => (
                        <button key={i} className="h-[19px] font-['DejaVu_Sans',sans-serif] text-[10px] leading-3 font-bold text-[#aca899]">{i + 1}</button>
                    ))}
                    <button aria-label="Note" className="flex h-[19px] items-center justify-center"><NoteIcon /></button>
                </div>
            </Group>
        </aside>
    );
}

function Taskbar() {
    return (
        <footer className="flex h-[27px] shrink-0 items-stretch bg-linear-to-b from-[#4a8df5] via-[#245cdc] via-20% to-[#2159d6]">
            <button className="flex w-[87px] items-center gap-[6px] rounded-r-lg bg-linear-to-b from-[#63b360] via-[#3c9a3c] via-30% to-[#338a33] pl-[9px] font-['Open_Sans',sans-serif] text-[15px] leading-5 font-bold text-white italic">
                <Glyph>
                    <path d="M2 3c2-1 4-1 5 0L6 8c-2-1-3-1-5 0z" fill="#e8592b" />
                    <path d="M8 4c2 1 4 1 6 0l-1 5c-2 1-4 1-6 0z" fill="#7fd04a" />
                    <path d="M1 9c2-1 3-1 5 0l-1 5c-2-1-3-1-5 0z" fill="#4f8cf0" />
                    <path d="M7 10c2 1 4 1 6 0l-1 5c-2 1-4 1-6 0z" fill="#f5cf35" />
                </Glyph>
                Start
            </button>
            <button className={clsx(MENU, 'mt-[3px] mb-[2px] ml-2 flex w-[140px] items-center gap-[3px] rounded-[2px] bg-[#1c4db5] pl-[9px] text-white')}>
                <AppIcon />ECM Titanium
            </button>
            <button className={clsx(UI, 'mt-[3px] mb-[2px] ml-px flex w-[140px] items-center gap-[3px] rounded-[2px] bg-[#3a7ff2] pl-2 text-white')}>
                <Glyph size={15}>
                    <path d="M0 0h16v16H0z" fill="#fff" />
                    <path d="M2 2l4 1 2-3 1 4 5-2-2 5 4 2-5 1 1 5-4-2-3 3v-5l-4-2 3-2z" fill="#d91414" />
                </Glyph>
                0DD7A2 0DD824.jpg ...
            </button>
            <span className="flex-1" />
            <span className={clsx(UI, 'flex w-8 items-center text-white')}>DE</span>
            <div className="flex w-[65px] items-center gap-2 bg-linear-to-b from-[#3db4f8] via-[#1290e8] via-20% to-[#128ce2]">
                <button aria-label="Mostra icone" className="-ml-[8px] flex h-4 w-4 items-center justify-center rounded-full bg-[#3b9ff0]">
                    <svg viewBox="0 0 8 8" width="9" height="9"><path d="M5.500 1L2.500 4l3 3" fill="none" stroke="#fff" strokeWidth="1.700" /></svg>
                </button>
                <span className={clsx(UI, 'whitespace-nowrap text-white')}>9:53 PM</span>
            </div>
        </footer>
    );
}

export default function App() {
    return (
        <div className="flex min-h-screen flex-col bg-[#ece9d8] text-black">
            <TitleBar />
            <nav className={clsx(MENU, 'flex h-[18px] items-center gap-2 pl-[5px] whitespace-nowrap')}>
                {['File', 'Finestre', 'Strumenti', 'Variazione manuale', 'Movimenti', 'Selezione', 'BitPower', 'Vai a ...'].map((m) => (
                    <button key={m}>{m}</button>
                ))}
            </nav>
            <Toolbars />
            <DataRow />
            <main className="flex flex-1 items-stretch">
                <div className="flex min-w-0 flex-1 flex-col">
                    <ZoomRow />
                    <div className="flex pr-1 pl-[3px]">
                        <div className="min-w-0 flex-1"><Chart /></div>
                        <div className="ml-[5px] flex w-[17px] flex-col justify-between border-l border-[#c5c2b2] bg-[#fdfdf8] text-[#c0bdae]">
                            <button aria-label="Su" className="flex h-4 items-center justify-center border border-[#e0ddd0] bg-[#f1efe6]">
                                <svg viewBox="0 0 8 8" width="8" height="8"><path d="M1 6l3-3 3 3" fill="none" stroke="currentColor" strokeWidth="1.700" /></svg>
                            </button>
                            <button aria-label="Giù" className="flex h-4 items-center justify-center border border-[#e0ddd0] bg-[#f1efe6]">
                                <svg viewBox="0 0 8 8" width="8" height="8"><path d="M1 2l3 3 3-3" fill="none" stroke="currentColor" strokeWidth="1.700" /></svg>
                            </button>
                        </div>
                    </div>
                    <span className="flex-1" />
                    <BottomRow />
                </div>
                <SidePanel />
            </main>
            <div className={clsx(MENU, 'flex h-[17px] shrink-0 items-center border-t border-[#aca899]')}>
                <span className="h-3 w-[307px] border-r border-[#c5c2b2]" />
                <span className="h-3 w-[281px] border-r border-[#c5c2b2]" />
                <span className="pl-[3px]">Checksum: NO</span>
            </div>
            <Taskbar />
        </div>
    );
}
